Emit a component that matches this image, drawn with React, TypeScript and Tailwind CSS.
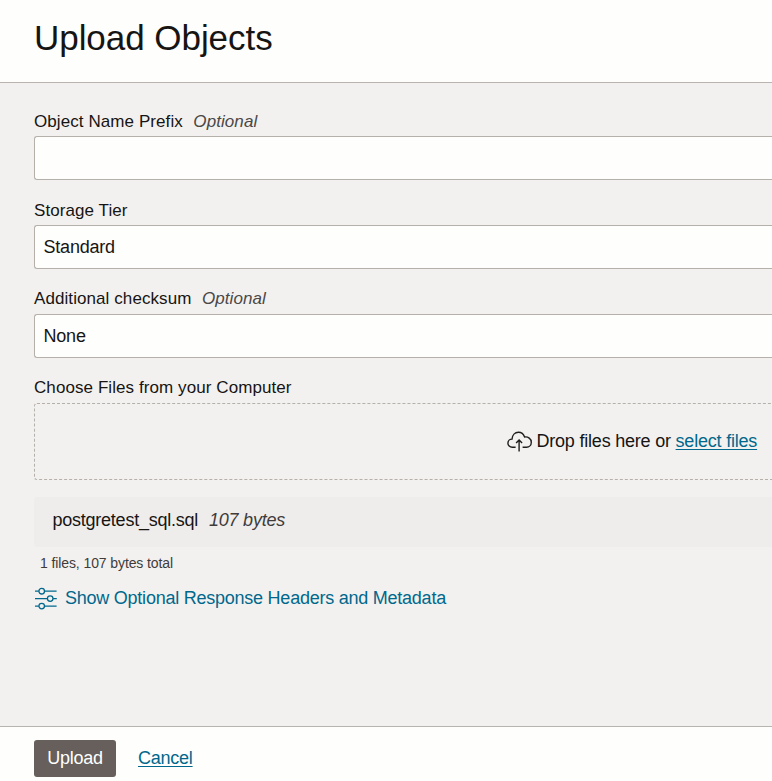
import type { ReactNode } from "react";

function Label({ children, optional }: { children: ReactNode; optional?: boolean }) {
  return (
    <div className="flex h-6 items-center gap-[10.5px] pt-[2px] text-[17px] leading-6 tracking-[0.08px] whitespace-nowrap">
      <span>{children}</span>
      {optional && <span className="text-[#4b4846] italic">Optional</span>}
    </div>
  );
}

function Field({ value }: { value?: string }) {
  return (
    <div className="mt-[3px] flex h-11 items-center rounded-l-[3px] border border-r-0 border-[#b5b0aa] bg-[#fefefc] pl-[8.6px]">
      {value}
    </div>
  );
}

function CloudUpload() {
  return (
    <svg width="26" height="22" viewBox="0 0 26 22" fill="none" stroke="#201e1c" strokeWidth="1.4" className="shrink-0">
      <path d="M8.6 16.3H5.2C2.8 16.3 0.9 14.5 0.9 12.2C0.9 9.8 2.8 8.1 5 8.1C5.3 4 7.9 1.3 11.4 1.3C14.4 1.3 16.6 3.1 17.6 6C21 5.4 24.3 7.9 24.3 11.2C24.3 14.1 22.2 16.3 19.5 16.3H15.6" />
      <path d="M12.1 20.5V9M9.1 12L12.1 8.9L15.1 12" />
    </svg>
  );
}

function Sliders() {
  return (
    <svg width="22" height="23" viewBox="0 0 22 23" fill="none" stroke="#00688c" strokeWidth="1.3" className="shrink-0">
      <path d="M0 4.2H3.8M9.6 4.2H21.6M0 11.6H12.3M18.1 11.6H21.8M0 19.1H3.8M9.6 19.1H21.6" />
      <circle cx="6.7" cy="4.2" r="2.8" />
      <circle cx="15.2" cy="11.6" r="2.8" />
      <circle cx="6.7" cy="19.1" r="2.8" />
    </svg>
  );
}

export default function App() {
  return (
    <div className="flex h-[781px] w-[772px] flex-col overflow-hidden bg-[#f3f1f0] font-['Liberation_Sans',Arial,sans-serif] text-[18px] tracking-[-0.24px] text-[#161513]">
      <header className="flex h-[83px] shrink-0 items-start border-b border-[#b9b4af] bg-[#fefefc] pt-[18px] pl-[34px]">
        <h1 className="text-[35px] leading-10 tracking-[-0.05px]">Upload Objects</h1>
      </header>

      <main className="flex flex-1 flex-col pt-[26px] pl-[34px]">
        <Label optional>Object Name Prefix</Label>
        <Field />
        <div className="mt-[18px]">
          <Label>Storage Tier</Label>
          <Field value="Standard" />
        </div>
        <div className="mt-[17px]">
          <Label optional>Additional checksum</Label>
          <div className="pt-px">
            <Field value="None" />
          </div>
        </div>
        <div className="mt-[17px]">
          <Label>Choose Files from your Computer</Label>
        </div>
        <div className="mt-1 flex h-[77px] items-center rounded-l-[3px] border border-r-0 border-dashed border-[#b5b0aa] pl-[472px] whitespace-nowrap">
          <CloudUpload />
          <span className="mb-[2px] ml-[3.5px] leading-6 tracking-[-0.21px]">
            Drop files here or{" "}
            <a className="text-[#00688c] underline decoration-1 underline-offset-2">select files</a>
          </span>
        </div>

        <div className="mt-[17px] flex h-[50px] items-center gap-[11px] rounded-l-[3px] bg-[#efedec] pb-1 pl-[18.5px]">
          <span>postgretest_sql.sql</span>
          <span className="text-[#3f3c3a] italic">107 bytes</span>
        </div>
        <p className="mt-[6px] pl-[6px] text-[14px] leading-5 tracking-[-0.1px] text-[#3f3c3a]">1 files, 107 bytes total</p>
        <a className="mt-[13px] flex h-6 items-center gap-2 pl-px text-[#00688c]">
          <Sliders />
          <span>Show Optional Response Headers and Metadata</span>
        </a>
      </main>

      <footer className="flex h-[55px] shrink-0 items-start gap-[22px] border-t border-[#b9b4af] bg-[#fefefc] pt-[13px] pl-[34px]">
        <button className="h-[37px] w-[82px] rounded-[3px] bg-[#665f5b] text-white">Upload</button>
        <a className="leading-[36px] text-[#00688c] underline decoration-1 underline-offset-2">Cancel</a>
      </footer>
    </div>
  );
}
